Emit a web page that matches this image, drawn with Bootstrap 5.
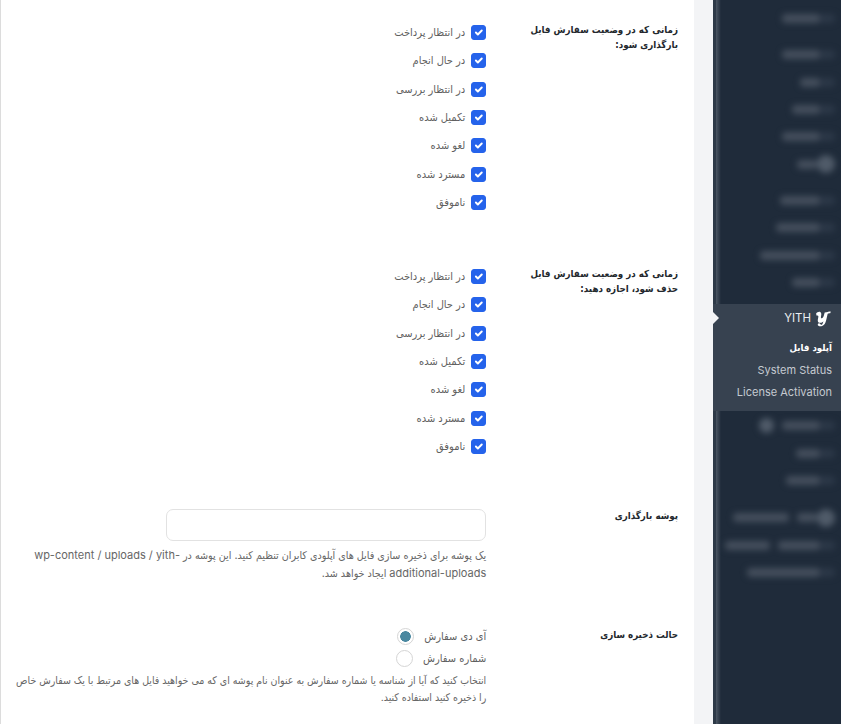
<!DOCTYPE html>
<html lang="fa" dir="rtl">
<head>
<meta charset="utf-8">
<title>YITH</title>
<link rel="stylesheet" href="https://cdn.jsdelivr.net/npm/bootstrap@5.3.0/dist/css/bootstrap.min.css">
<style>
html,body{height:724px;overflow:hidden}
body{background:#f3f4f6;font-family:Inter,"DejaVu Sans Condensed","DejaVu Sans",sans-serif;font-size:11px;color:#5f5f5f}
.shell{width:841px;height:724px}
.side{width:128px;height:724px;background:linear-gradient(to right,#2d3947 0 3px,#4b5663 3px,#1f2b3a 8px);overflow:hidden}
.gutter{width:19px}
.panel{width:694px;height:724px;background:#fff;border-left:1px solid #dcdcdc;padding:25px 16px 0 10px;overflow:hidden}
.opt-row{height:244px}
.opt-row-b{height:240px}
.opt-row-c{height:116px}
.opt-name{width:192px;padding-left:36px;font-family:"DejaVu Sans Condensed","DejaVu Sans",sans-serif;font-weight:700;font-size:9.7px;line-height:15px;color:#23282d;margin-top:-3px}
.opt-name.pad-c{padding-top:2px}
.opt-name.pad-d{padding-top:5px}
.opt-body{width:476px}
.chk{height:28.35px;gap:6px}
.chk .form-check-input{width:15px;height:15px;margin:0;border-radius:3px;background-color:#2563eb;border-color:#2563eb;flex:none}
.chk label{line-height:15px}
.folder{width:320px;height:32px;border:1px solid #e2e2e2;border-radius:7px;box-shadow:none;padding:0 10px}
.hint{line-height:16.5px;font-size:10.7px;color:#666;margin:6px 0 0}
.hint-b{margin-top:4px;font-size:10.5px}
.latin{font-size:11px}
.rad{height:22px;gap:10px}
.rad .form-check-input{width:17px;height:17px;margin:0;border:1px solid #d5d5d5;background-color:#fff;background-image:none;flex:none}
.rad .on{background:radial-gradient(circle,#4a88a0 0 5px,#fff 5.6px);border-color:#d5d5d5}
.rad label{line-height:17px}
.menu-top{height:304px;padding-top:5px}
.menu-low{height:314px;padding-top:1px}
.menu-low .blur-row{height:27.6px}
.blur-row{height:27.3px;padding-right:6px;filter:blur(3.4px)}
.blur-row.sp{margin-top:9px}
.blip{height:9px;border-radius:4px;background:#454f5d;margin-left:8px}
.blip.dim{background:#2c3848;width:15px;margin-left:0}
.dot{height:15px;width:15px;border-radius:50%;background:#505b69}
.dot.big{margin-left:0;width:18px;height:18px}
.w20{width:20px}.w24{width:24px}.w28{width:28px}.w34{width:34px}.w38{width:38px}.w40{width:40px}.w42{width:42px}.w44{width:44px}.w45{width:45px}.w56{width:56px}.w60{width:60px}.w73{width:73px}
.active-box{height:107px;background:#374250;padding:0 9px 0 0;overflow:visible}
.head{height:29px;color:#eceef0;font-size:11.5px}
.ylogo{width:17px;height:17px;flex:none}
.arrow{position:absolute;right:122px;top:8px;width:0;height:0;border-top:6px solid transparent;border-bottom:6px solid transparent;border-left:6px solid #f3f4f6}
.sub{font-size:11px;line-height:22.2px;color:#c5cad0}
.sub .cur{font-family:"DejaVu Sans Condensed","DejaVu Sans",sans-serif;font-weight:700;font-size:9.6px;color:#fff;margin-top:4px}
</style>
</head>
<body>
<div class="shell d-flex">
  <aside class="side flex-none">
    <div class="menu-top">
      <div class="blur-row d-flex align-items-center"><span class="blip dim"></span><span class="blip w38"></span></div>
      <div class="blur-row sp d-flex align-items-center"><span class="blip dim"></span><span class="blip w38"></span></div>
      <div class="blur-row d-flex align-items-center"><span class="blip dim"></span><span class="blip w20"></span></div>
      <div class="blur-row d-flex align-items-center"><span class="blip dim"></span><span class="blip w28"></span></div>
      <div class="blur-row d-flex align-items-center"><span class="blip dim"></span><span class="blip w38"></span></div>
      <div class="blur-row d-flex align-items-center"><span class="dot big"></span><span class="blip w20"></span></div>
      <div class="blur-row sp d-flex align-items-center"><span class="blip dim"></span><span class="blip w40"></span></div>
      <div class="blur-row d-flex align-items-center"><span class="blip dim"></span><span class="blip w44"></span></div>
      <div class="blur-row d-flex align-items-center"><span class="blip dim"></span><span class="blip w60"></span></div>
      <div class="blur-row d-flex align-items-center"><span class="blip dim"></span><span class="blip w28"></span></div>
    </div>
    <div class="active-box position-relative">
      <span class="arrow"></span>
      <div class="head d-flex align-items-center gap-1">
        <svg class="ylogo" viewBox="0 0 16 16" aria-hidden="true"><path fill="#fff" d="M1 3.5C2 1.8 4 1.2 5.2 2c1 .7.8 2.2.5 3.6-.3 1.4-.1 2.3.8 2.2 1.1-.2 1.7-2.2 2.1-3.6l.5-1.9 3.2-.5-1.5 6.7c-.5 2.4-1.2 4.4-2.6 5.7-1.4 1.2-3.6 1.6-5 .7-.9-.6-.8-1.9.1-2.3.8-.3 1.4.2 1.8.9.4.7 1.3.6 1.9-.4.4-.7.7-1.6.9-2.6-.8 1-1.8 1.6-3 1.6-1.8 0-2.6-1.3-2.2-3.2.2-1.1.6-2.3.4-3.2-.2-.7-.9-.7-1.5-.2z"/><path fill="#fff" d="M11 2.6c1-.9 2.4-1.4 3.9-1l-.6 1.5c-.9-.2-1.9 0-2.8.5z"/></svg>
        <span dir="ltr">YITH</span>
      </div>
      <div class="sub d-flex flex-column">
        <div class="cur">آپلود فایل</div>
        <div dir="ltr" class="text-end">System Status</div>
        <div dir="ltr" class="text-end">License Activation</div>
      </div>
    </div>
    <div class="menu-low">
      <div class="blur-row d-flex align-items-center"><span class="blip dim"></span><span class="blip w38"></span><span class="dot"></span></div>
      <div class="blur-row d-flex align-items-center"><span class="blip dim"></span><span class="blip w24"></span></div>
      <div class="blur-row d-flex align-items-center"><span class="blip dim"></span><span class="blip w34"></span></div>
      <div class="blur-row sp d-flex align-items-center"><span class="dot big"></span><span class="blip w20"></span><span class="blip w56"></span></div>
      <div class="blur-row d-flex align-items-center"><span class="blip dim"></span><span class="blip w42"></span><span class="blip w45"></span></div>
      <div class="blur-row d-flex align-items-center"><span class="blip dim"></span><span class="blip w73"></span></div>
    </div>
  </aside>
  <div class="gutter"></div>
  <main class="panel">
    <section class="opt-row d-flex">
      <div class="opt-name">زمانی که در وضعیت سفارش فایل بارگذاری شود:</div>
      <div class="opt-body">
        <div class="chk d-flex align-items-start"><input class="form-check-input" type="checkbox" id="a1" checked><label for="a1">در انتظار پرداخت</label></div>
        <div class="chk d-flex align-items-start"><input class="form-check-input" type="checkbox" id="a2" checked><label for="a2">در حال انجام</label></div>
        <div class="chk d-flex align-items-start"><input class="form-check-input" type="checkbox" id="a3" checked><label for="a3">در انتظار بررسی</label></div>
        <div class="chk d-flex align-items-start"><input class="form-check-input" type="checkbox" id="a4" checked><label for="a4">تکمیل شده</label></div>
        <div class="chk d-flex align-items-start"><input class="form-check-input" type="checkbox" id="a5" checked><label for="a5">لغو شده</label></div>
        <div class="chk d-flex align-items-start"><input class="form-check-input" type="checkbox" id="a6" checked><label for="a6">مسترد شده</label></div>
        <div class="chk d-flex align-items-start"><input class="form-check-input" type="checkbox" id="a7" checked><label for="a7">ناموفق</label></div>
      </div>
    </section>
    <section class="opt-row-b d-flex">
      <div class="opt-name">زمانی که در وضعیت سفارش فایل حذف شود، اجازه دهید:</div>
      <div class="opt-body">
        <div class="chk d-flex align-items-start"><input class="form-check-input" type="checkbox" id="b1" checked><label for="b1">در انتظار پرداخت</label></div>
        <div class="chk d-flex align-items-start"><input class="form-check-input" type="checkbox" id="b2" checked><label for="b2">در حال انجام</label></div>
        <div class="chk d-flex align-items-start"><input class="form-check-input" type="checkbox" id="b3" checked><label for="b3">در انتظار بررسی</label></div>
        <div class="chk d-flex align-items-start"><input class="form-check-input" type="checkbox" id="b4" checked><label for="b4">تکمیل شده</label></div>
        <div class="chk d-flex align-items-start"><input class="form-check-input" type="checkbox" id="b5" checked><label for="b5">لغو شده</label></div>
        <div class="chk d-flex align-items-start"><input class="form-check-input" type="checkbox" id="b6" checked><label for="b6">مسترد شده</label></div>
        <div class="chk d-flex align-items-start"><input class="form-check-input" type="checkbox" id="b7" checked><label for="b7">ناموفق</label></div>
      </div>
    </section>
    <section class="d-flex opt-row-c">
      <div class="opt-name pad-c">پوشه بارگذاری</div>
      <div class="opt-body">
        <input class="form-control folder" type="text">
        <p class="hint">یک پوشه برای ذخیره سازی فایل های آپلودی کابران تنظیم کنید. این پوشه در <span class="latin">wp-content / uploads / yith-additional-uploads</span> ایجاد خواهد شد.</p>
      </div>
    </section>
    <section class="d-flex">
      <div class="opt-name pad-d">حالت ذخیره سازی</div>
      <div class="opt-body">
        <div class="rad d-flex align-items-center"><label for="r1">آی دی سفارش</label><input class="form-check-input on" type="radio" name="r" id="r1" checked></div>
        <div class="rad d-flex align-items-center"><label for="r2">شماره سفارش</label><input class="form-check-input" type="radio" name="r" id="r2"></div>
        <p class="hint hint-b">انتخاب کنید که آیا از شناسه یا شماره سفارش به عنوان نام پوشه ای که می خواهید فایل های مرتبط با یک سفارش خاص را ذخیره کنید استفاده کنید.</p>
      </div>
    </section>
  </main>
</div>
</body>
</html>
